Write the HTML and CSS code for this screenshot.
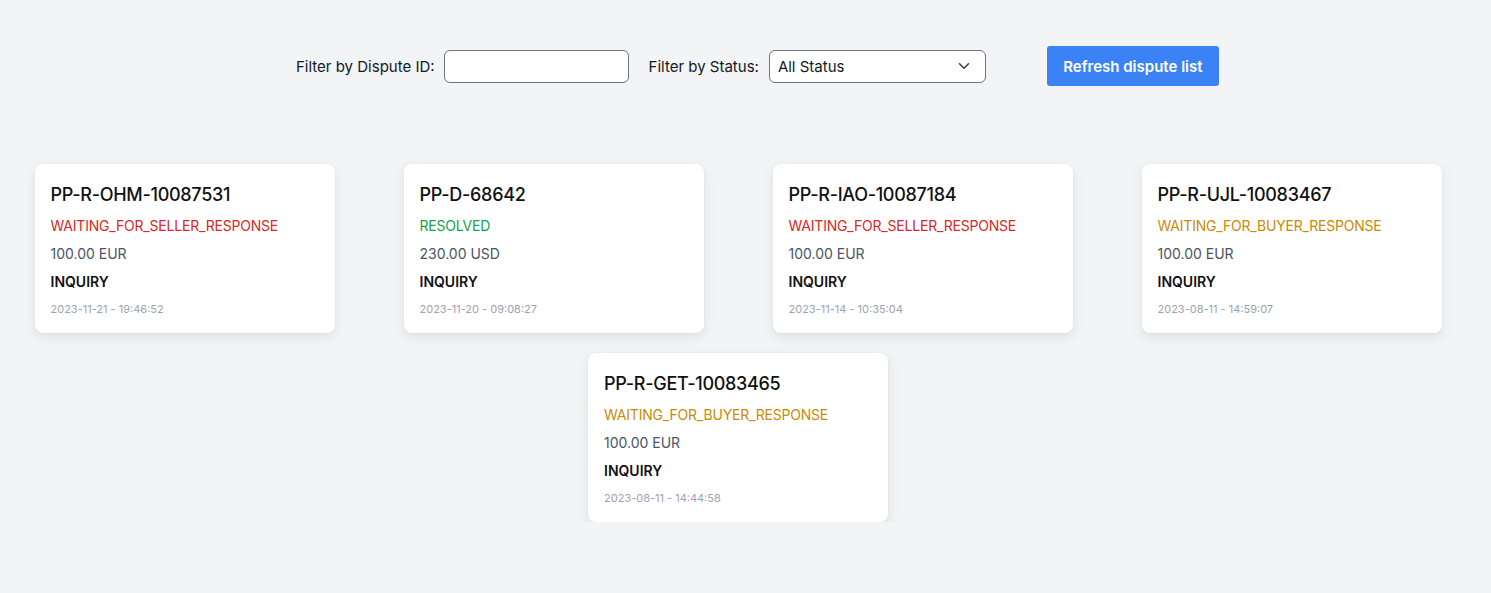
FILE: index.html
```html
<!DOCTYPE html>
<html lang="en">
<head>
<meta charset="utf-8">
<title>Disputes</title>
<link rel="stylesheet" href="styles.css">
</head>
<body>
<div class="page">
  <div class="filters">
    <label class="filter-label" for="dispute-id">Filter by Dispute ID:</label>
    <input class="filter-input" id="dispute-id" type="text">
    <label class="filter-label status-label" for="status">Filter by Status:</label>
    <div class="select">
      <span class="select-value">All Status</span>
      <svg class="chevron" width="12" height="8" viewBox="0 0 12 8"><path d="M1.5 1.8 L6 6.2 L10.5 1.8" fill="none" stroke="#374151" stroke-width="1.6" stroke-linecap="round" stroke-linejoin="round"/></svg>
    </div>
    <button class="refresh">Refresh dispute list</button>
  </div>

  <div class="cards">
    <div class="card">
      <div class="card-title">PP-R-OHM-10087531</div>
      <div class="card-status red">WAITING_FOR_SELLER_RESPONSE</div>
      <div class="card-amount">100.00 EUR</div>
      <div class="card-reason">INQUIRY</div>
      <div class="card-date">2023-11-21 - 19:46:52</div>
    </div>
    <div class="card">
      <div class="card-title">PP-D-68642</div>
      <div class="card-status green">RESOLVED</div>
      <div class="card-amount">230.00 USD</div>
      <div class="card-reason">INQUIRY</div>
      <div class="card-date">2023-11-20 - 09:08:27</div>
    </div>
    <div class="card">
      <div class="card-title">PP-R-IAO-10087184</div>
      <div class="card-status red">WAITING_FOR_SELLER_RESPONSE</div>
      <div class="card-amount">100.00 EUR</div>
      <div class="card-reason">INQUIRY</div>
      <div class="card-date">2023-11-14 - 10:35:04</div>
    </div>
    <div class="card">
      <div class="card-title">PP-R-UJL-10083467</div>
      <div class="card-status yellow">WAITING_FOR_BUYER_RESPONSE</div>
      <div class="card-amount">100.00 EUR</div>
      <div class="card-reason">INQUIRY</div>
      <div class="card-date">2023-08-11 - 14:59:07</div>
    </div>
    <div class="card">
      <div class="card-title">PP-R-GET-10083465</div>
      <div class="card-status yellow">WAITING_FOR_BUYER_RESPONSE</div>
      <div class="card-amount">100.00 EUR</div>
      <div class="card-reason">INQUIRY</div>
      <div class="card-date">2023-08-11 - 14:44:58</div>
    </div>
  </div>
</div>
</body>
</html>
```

FILE: styles.css
```css
* { box-sizing: border-box; }

html, body {
  margin: 0;
  padding: 0;
  background: #f3f4f6;
  font-family: Inter, "Liberation Sans", sans-serif;
  color: #111827;
}

.page {
  width: 1476px;
  padding-top: 46px;
}

.filters {
  display: flex;
  align-items: center;
  height: 40px;
  padding-left: 296px;
}

.filter-label {
  font-size: 15px;
  color: #111827;
  margin-right: 9px;
}

.status-label {
  margin-left: 20px;
  margin-right: 10px;
}

.filter-input {
  width: 185px;
  height: 33px;
  border: 1px solid #6b7280;
  border-radius: 6px;
  background: #fff;
  padding: 0 8px;
  font: inherit;
}

.select {
  width: 217px;
  height: 33px;
  border: 1px solid #6b7280;
  border-radius: 6px;
  background: #fff;
  display: flex;
  align-items: center;
  justify-content: space-between;
  padding: 0 15px 0 8px;
}

.select-value {
  font-size: 15px;
  color: #111827;
}

.refresh {
  margin-left: 61px;
  width: 172px;
  height: 40px;
  border: none;
  border-radius: 3px;
  background: #3b82f6;
  color: #fff;
  font-family: inherit;
  font-size: 15px;
  font-weight: 600;
  padding: 0;
}

.cards {
  margin-top: 78px;
  display: flex;
  flex-wrap: wrap;
  justify-content: space-around;
  row-gap: 20px;
}

.card {
  width: 300px;
  background: #fff;
  border-radius: 8px;
  box-shadow: 0 4px 12px rgba(0, 0, 0, 0.09), 0 0 2px rgba(0, 0, 0, 0.05);
  padding: 17px 16px 16px;
}

.card-title {
  font-size: 18px;
  line-height: 28px;
  font-weight: 500;
  letter-spacing: -0.3px;
  color: #111;
  margin-bottom: 7px;
}

.card-status, .card-amount, .card-reason {
  font-size: 14px;
  line-height: 20px;
  margin-bottom: 8px;
}

.card-status { letter-spacing: -0.2px; }

.red { color: #dc2626; }
.green { color: #16a34a; }
.yellow { color: #ca8a04; }

.card-amount { color: #4b5563; }

.card-reason {
  font-weight: 600;
  color: #111;
  margin-bottom: 9px;
}

.card-date {
  font-size: 11px;
  line-height: 16px;
  color: #9ca3af;
}
```
